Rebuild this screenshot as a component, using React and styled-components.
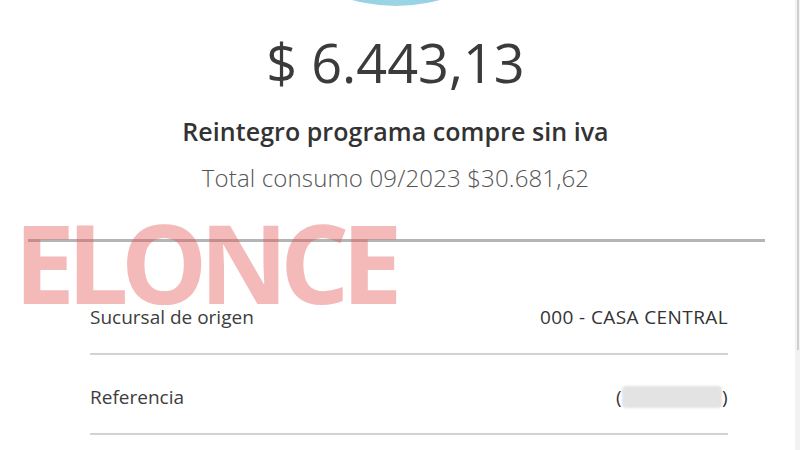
import React from 'react'
import styled, { createGlobalStyle } from 'styled-components'

const GlobalStyle = createGlobalStyle`
    body {
        margin: 0;
        background: #ffffff;
        font-family: "Open Sans", "Liberation Sans", sans-serif;
    }
`

const Screen = styled.div`
    position: relative;
    display: flex;
    width: 800px;
    height: 450px;
    overflow: hidden;
    background: #ffffff;
`

const Main = styled.div`
    flex: 1;
    display: flex;
    flex-direction: column;
    align-items: stretch;
`

const Header = styled.div`
    display: flex;
    flex-direction: column;
    align-items: center;
    padding-right: 4px;
`

const Avatar = styled.div`
    width: 328px;
    height: 328px;
    margin-top: -322px;
    border-radius: 50%;
    background: radial-gradient(circle at 50% 96%, #9dd6e6 0%, #7cc6dc 40%, #74c1d8 100%);
`

const Amount = styled.h1`
    margin: 26px 0 0;
    font-size: 54px;
    line-height: 60px;
    font-weight: 400;
    color: #3b3b3b;
`

const Title = styled.h2`
    margin: 24px 0 0;
    font-size: 25px;
    line-height: 30px;
    font-weight: 600;
    color: #333333;
    letter-spacing: 0.05px;
`

const Subtitle = styled.p`
    margin: 17px 0 0;
    font-size: 24px;
    line-height: 30px;
    font-weight: 300;
    color: #555555;
    letter-spacing: 0.15px;
`

const Rule = styled.hr`
    margin: 46px 30px 0 28px;
    height: 3px;
    border: 0;
    background: #b4b4b4;
`

const Details = styled.div`
    margin-top: 33px;
    padding: 0 67px 0 90px;
    display: flex;
    flex-direction: column;
`

const Row = styled.div`
    display: flex;
    justify-content: space-between;
    align-items: center;
    padding: 30px 0 24px;
    border-bottom: 2px solid #d2d2d2;
    font-size: 19px;
    line-height: 24px;
    color: #3d3d3d;
`

const Value = styled.span`
    display: flex;
    align-items: center;
    color: #333333;
    letter-spacing: 0.4px;
`

const Hidden = styled.span`
    display: inline-block;
    width: 100px;
    height: 22px;
    border-radius: 4px;
    background: #e3e3e3;
    filter: blur(1px);
`

const Scrollbar = styled.div`
    width: 5px;
    background: #f2f2f2;
    display: flex;
    justify-content: center;
`

const Thumb = styled.div`
    width: 2px;
    height: 350px;
    background: #cfcfcf;
`

const Watermark = styled.div`
    position: absolute;
    left: 14px;
    top: 207px;
    font-family: "Open Sans", "Liberation Sans", sans-serif;
    font-size: 109px;
    line-height: 1;
    font-weight: 700;
    letter-spacing: -8px;
    color: rgba(228, 80, 80, 0.4);
    pointer-events: none;
`

const App = () => {
    return (
        <>
            <GlobalStyle />
            <Screen>
                <Main>
                    <Header>
                        <Avatar />
                        <Amount>$ 6.443,13</Amount>
                        <Title>Reintegro programa compre sin iva</Title>
                        <Subtitle>Total consumo 09/2023 $30.681,62</Subtitle>
                    </Header>
                    <Rule />
                    <Details>
                        <Row>
                            <span>Sucursal de origen</span>
                            <Value>000 - CASA CENTRAL</Value>
                        </Row>
                        <Row>
                            <span>Referencia</span>
                            <Value>(<Hidden />)</Value>
                        </Row>
                    </Details>
                </Main>
                <Scrollbar>
                    <Thumb />
                </Scrollbar>
                <Watermark>ELONCE</Watermark>
            </Screen>
        </>
    )
}

export default App
